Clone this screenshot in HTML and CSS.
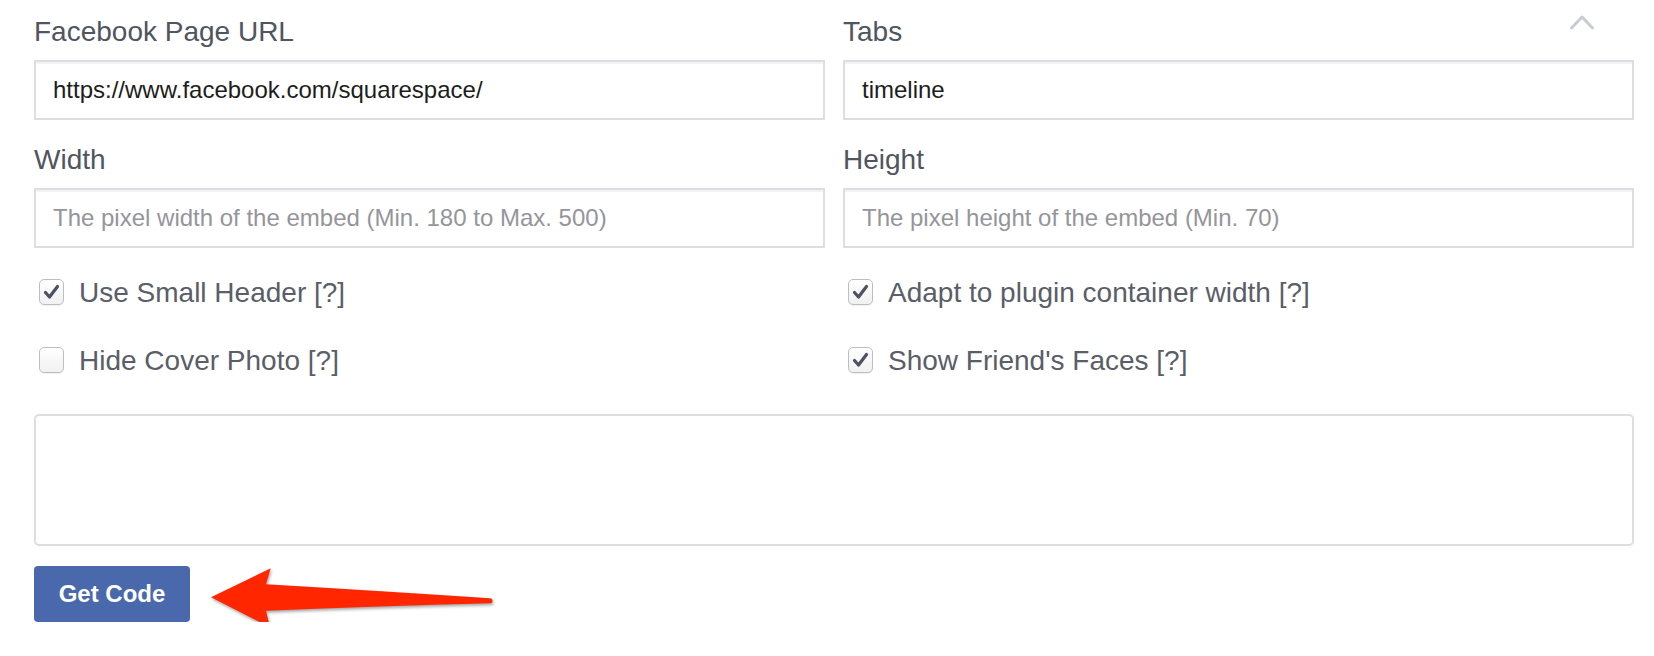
FILE: index.html
```html
<!DOCTYPE html>
<html lang="en">
<head>
<meta charset="utf-8">
<title>Facebook Page Plugin</title>
<link rel="stylesheet" href="styles.css">
</head>
<body>
<div class="form">
  <svg class="collapse" width="26" height="22" viewBox="0 0 26 22" aria-hidden="true">
    <path d="M2.5 17 L13 6 L23.5 17" fill="none" stroke="#c8ccd2" stroke-width="3" stroke-linecap="round" stroke-linejoin="round"/>
  </svg>

  <div class="fields">
    <div class="field">
      <div class="label">Facebook Page URL</div>
      <div class="input">https://www.facebook.com/squarespace/</div>
    </div>
    <div class="field">
      <div class="label">Tabs</div>
      <div class="input">timeline</div>
    </div>
    <div class="field">
      <div class="label">Width</div>
      <div class="input placeholder">The pixel width of the embed (Min. 180 to Max. 500)</div>
    </div>
    <div class="field">
      <div class="label">Height</div>
      <div class="input placeholder">The pixel height of the embed (Min. 70)</div>
    </div>
  </div>

  <div class="checks">
    <div class="check">
      <span class="box"><svg width="25" height="26" viewBox="0 0 25 26"><path d="M6.5 13.5 L10.5 18 L18.5 7.5" fill="none" stroke="#4d5260" stroke-width="3.2" stroke-linecap="round" stroke-linejoin="round"/></svg></span>
      <span class="check-text">Use Small Header [?]</span>
    </div>
    <div class="check">
      <span class="box"><svg width="25" height="26" viewBox="0 0 25 26"><path d="M6.5 13.5 L10.5 18 L18.5 7.5" fill="none" stroke="#4d5260" stroke-width="3.2" stroke-linecap="round" stroke-linejoin="round"/></svg></span>
      <span class="check-text">Adapt to plugin container width [?]</span>
    </div>
    <div class="check">
      <span class="box"></span>
      <span class="check-text">Hide Cover Photo [?]</span>
    </div>
    <div class="check">
      <span class="box"><svg width="25" height="26" viewBox="0 0 25 26"><path d="M6.5 13.5 L10.5 18 L18.5 7.5" fill="none" stroke="#4d5260" stroke-width="3.2" stroke-linecap="round" stroke-linejoin="round"/></svg></span>
      <span class="check-text">Show Friend's Faces [?]</span>
    </div>
  </div>

  <div class="code"></div>

  <div class="actions">
    <div class="button">Get Code</div>
    <svg class="arrow" width="300" height="80" viewBox="0 0 300 80" aria-hidden="true">
      <path d="M11 43.3 L70.7 14.3 L66 30.3 Q180 37 290 44.3 A2.5 2.5 0 0 1 290 49.3 Q180 52 66 56.7 L70 73.3 Z" fill="#ff2600"/>
    </svg>
  </div>
</div>
</body>
</html>
```

FILE: styles.css
```css
* {
  box-sizing: border-box;
}

body {
  margin: 0;
  background: #ffffff;
  font-family: "Liberation Sans", Arial, Helvetica, sans-serif;
}

.form {
  position: relative;
  width: 1654px;
  padding: 12px 20px 0 34px;
}

.collapse {
  position: absolute;
  top: 11px;
  left: 1569px;
}

.fields {
  display: grid;
  grid-template-columns: 1fr 1fr;
  column-gap: 18px;
  row-gap: 20px;
}

.label {
  font-size: 28px;
  line-height: 40px;
  color: #50555f;
  margin-bottom: 8px;
}

.input {
  height: 60px;
  border: 2px solid #dedee2;
  box-shadow: inset 0 2px 0 #f3f3f5;
  padding: 0 17px;
  display: flex;
  align-items: center;
  font-size: 24px;
  color: #1d1d20;
  background: #ffffff;
}

.input.placeholder {
  color: #95959b;
}

.checks {
  display: grid;
  grid-template-columns: 1fr 1fr;
  column-gap: 18px;
  row-gap: 28px;
  margin-top: 24px;
}

.check {
  display: flex;
  align-items: center;
  height: 40px;
  padding-left: 5px;
  gap: 15px;
}

.box {
  width: 25px;
  height: 26px;
  border: 1px solid #bdbdc2;
  border-radius: 5px;
  background: linear-gradient(#ffffff, #f1f1f3);
  box-shadow: 0 1px 1px rgba(0, 0, 0, 0.06);
  position: relative;
  flex: none;
}

.box svg {
  position: absolute;
  left: -1px;
  top: -1px;
}

.check-text {
  font-size: 28px;
  line-height: 40px;
  padding-top: 2px;
  color: #5a5e68;
}

.code {
  margin-top: 34px;
  height: 132px;
  border: 2px solid #dedee2;
  border-radius: 5px;
  background: #ffffff;
}

.actions {
  display: flex;
  align-items: center;
  margin-top: 20px;
  height: 56px;
}

.button {
  width: 156px;
  height: 56px;
  border-radius: 4px;
  background: #4a69ad;
  color: #ffffff;
  font-weight: bold;
  font-size: 24px;
  display: flex;
  align-items: center;
  justify-content: center;
  flex: none;
}

.arrow {
  flex: none;
  margin: -12px 0 -12px 10px;
  filter: drop-shadow(1px 2px 1.5px rgba(0, 0, 0, 0.35));
}
```
